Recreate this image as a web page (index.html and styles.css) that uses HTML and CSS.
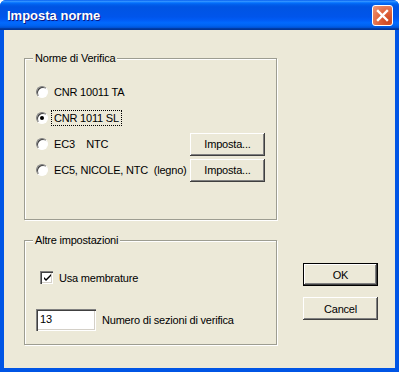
FILE: index.html
```html
<!DOCTYPE html>
<html>
<head>
    <title>Imposta norme</title>
    <link rel="stylesheet" href="styles.css">
</head>
<body>
    <div class="window">
        <div class="titlebar">
            <span class="title">Imposta norme</span>
            <span class="close">
                <svg width="19" height="19" viewBox="0 0 19 19">
                    <path d="M5 5 L14 14 M14 5 L5 14" stroke="#fff" stroke-width="2.4" stroke-linecap="square"/>
                </svg>
            </span>
        </div>

        <div class="client">
            <div class="groups">
                <fieldset class="group group-norme">
                    <legend>Norme di Verifica</legend>
                    <div class="row"><span class="radio"></span><span class="label">CNR 10011 TA</span></div>
                    <div class="row"><span class="radio checked"></span><span class="label focus">CNR 1011 SL</span></div>
                    <div class="row"><span class="radio"></span><span class="label">EC3    NTC</span><button class="btn btn-imposta">Imposta...</button></div>
                    <div class="row"><span class="radio"></span><span class="label">EC5, NICOLE, NTC  (legno)</span><button class="btn btn-imposta">Imposta...</button></div>
                </fieldset>

                <fieldset class="group group-altre">
                    <legend>Altre impostazioni</legend>
                    <div class="row row-check">
                        <span class="checkbox">
                            <svg width="9" height="9" viewBox="0 0 9 9">
                                <path d="M1 3 L1 5 L3 7 L8 2 L8 0 L3 5 Z" fill="#000"/>
                            </svg>
                        </span>
                        <span class="label">Usa membrature</span>
                    </div>
                    <div class="row row-input">
                        <span class="textbox">13</span>
                        <span class="label">Numero di sezioni di verifica</span>
                    </div>
                </fieldset>
            </div>

            <div class="actions">
                <button class="btn btn-default">OK</button>
                <button class="btn">Cancel</button>
            </div>
        </div>
    </div>
</body>
</html>
```

FILE: styles.css
```css
body {
    margin: 0;
    padding: 0;
    background: #fff;
    font-family: "Liberation Sans", Arial, sans-serif;
    font-size: 11px;
    letter-spacing: -0.2px;
    color: #000;
}
.window {
    width: 399px;
    height: 372px;
    box-sizing: border-box;
    background: #0055e5;
    border-radius: 6px 6px 0 0;
    overflow: hidden;
    display: flex;
    flex-direction: column;
}
.titlebar {
    height: 30px;
    flex: none;
    display: flex;
    align-items: center;
    padding: 0 6px 0 7px;
    background: linear-gradient(to bottom, #0058ee 0%, #3593ff 4%, #288eff 6%, #127dff 8%, #036ffc 10%, #0262ee 14%, #0057e5 20%, #0054e3 24%, #0055eb 56%, #005bf5 66%, #026afe 76%, #0062ef 86%, #0052d6 92%, #0040ab 94%, #003092 100%);
}
.title {
    flex: 1;
    color: #fff;
    font-weight: bold;
    font-size: 13px;
    letter-spacing: 0;
    text-shadow: 1px 1px 0 #0a1883;
    padding-top: 1px;
}
.close {
    width: 19px;
    height: 19px;
    border: 1px solid #fff;
    border-radius: 3px;
    background: radial-gradient(circle at 80% 80%, #cc4620 0%, #e0643c 45%, #f09a7c 100%);
    display: flex;
    margin-top: 1px;
}
.client {
    flex: 1;
    margin: 0 4px 4px 4px;
    background: #ece9d8;
    display: flex;
    padding: 21px 0 0 20px;
}
.groups {
    width: 253px;
}
.group {
    margin: 0;
    padding: 0 11px;
    box-sizing: border-box;
    border: 1px solid #9d9d91;
    box-shadow: 1px 1px 0 #fff, inset 1px 1px 0 #fff;
    min-width: 0;
}
.group legend {
    padding: 0 2px;
    margin-left: -3px;
    line-height: 14px;
    background: #ece9d8;
}
.group-norme {
    height: 169px;
    padding-top: 15px;
}
.group-altre {
    height: 112px;
    margin-top: 13px;
    padding-top: 24px;
}
.row {
    display: flex;
    align-items: center;
    height: 24px;
    margin-bottom: 2px;
    white-space: pre;
}
.label {
    padding: 1px 2px;
    margin-left: 3px;
    border: 1px dotted transparent;
}
.label.focus {
    border-color: #000;
}
.radio {
    width: 10px;
    height: 10px;
    flex: none;
    border-radius: 50%;
    background: #fff;
    border: 1px solid;
    border-color: #808080 #fff #fff #808080;
    box-shadow: inset 1px 1px 0 #404040;
    display: flex;
    align-items: center;
    justify-content: center;
}
.radio.checked::after {
    content: "";
    width: 4px;
    height: 4px;
    border-radius: 50%;
    background: #000;
}
.btn {
    font: inherit;
    letter-spacing: inherit;
    color: #000;
    width: 75px;
    height: 23px;
    padding: 0;
    border: none;
    background: #ece9d8;
    box-shadow: inset -1px -1px 0 #404040, inset 1px 1px 0 #fff, inset -2px -2px 0 #808080;
}
.btn-imposta {
    margin-left: auto;
}
.btn-default {
    border: 1px solid #000;
}
.row-check {
    height: 13px;
    margin: 0 0 25px 4px;
}
.checkbox {
    width: 13px;
    height: 13px;
    box-sizing: border-box;
    background: #fff;
    box-shadow: inset 1px 1px 0 #808080, inset 2px 2px 0 #404040, inset -1px -1px 0 #fff, inset -2px -2px 0 #d4d0c8;
    display: flex;
    align-items: center;
    justify-content: center;
    padding: 1px 0 0 1px;
}
.row-input {
    height: 22px;
}
.textbox {
    width: 60px;
    height: 22px;
    box-sizing: border-box;
    padding: 4px 0 0 4px;
    background: #fff;
    box-shadow: inset 1px 1px 0 #808080, inset 2px 2px 0 #404040, inset -1px -1px 0 #fff, inset -2px -2px 0 #d4d0c8;
}
.row-input .label {
    margin-left: 3px;
}
.actions {
    margin-left: 26px;
    padding-top: 212px;
    display: flex;
    flex-direction: column;
    gap: 11px;
}
```
